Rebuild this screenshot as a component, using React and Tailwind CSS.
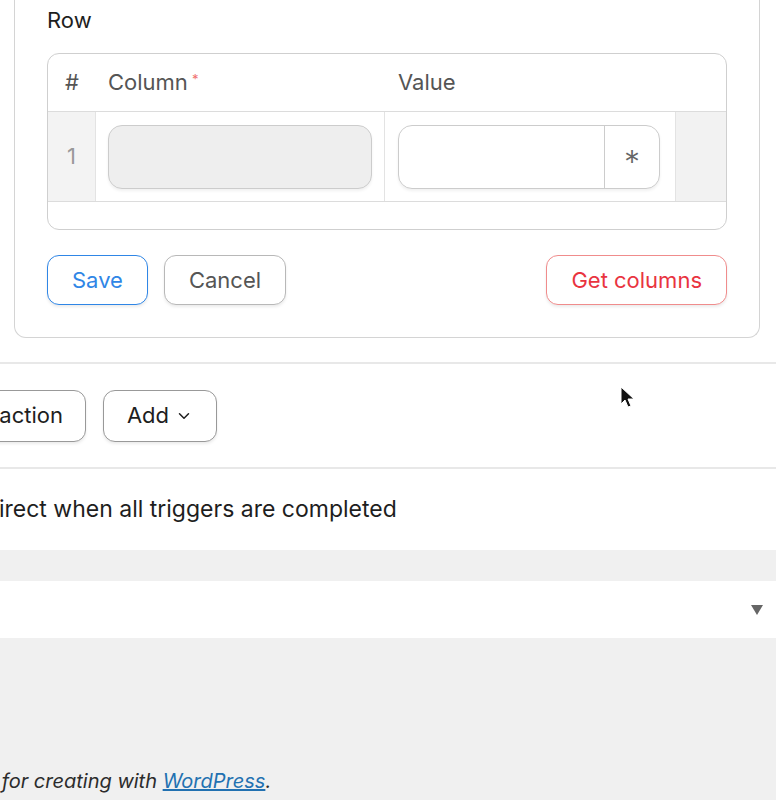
import { ChevronDown } from 'lucide-react';

const font = { fontFamily: 'Inter, "Noto Sans", sans-serif' };

function OutlineButton({ children, className = '' }) {
  return (
    <button
      className={`h-[50px] rounded-[12px] border bg-white px-[24px] text-[22px] shadow-[0_2px_3px_rgba(0,0,0,0.08)] ${className}`}
    >
      {children}
    </button>
  );
}

function RowTable() {
  return (
    <div className="overflow-hidden rounded-[12px] border border-[#cfcfcf] bg-white">
      <div className="grid h-[58px] grid-cols-[48px_289px_290px_1fr] items-center border-b border-[#dcdcdc] text-[22px] text-[#555]">
        <div className="text-center">#</div>
        <div className="pl-3">
          Column<sup className="ml-1 text-[13px] text-[#f07070]">*</sup>
        </div>
        <div className="pl-[13px]">Value</div>
        <div />
      </div>
      <div className="grid h-[90px] grid-cols-[48px_289px_290px_1fr] border-b border-[#dcdcdc]">
        <div className="flex items-center justify-center border-r border-[#e3e3e3] bg-[#f3f3f3] text-[22px] text-[#999]">
          1
        </div>
        <div className="flex items-center border-r border-[#e3e3e3] px-3">
          <div className="h-[64px] w-full rounded-[14px] border border-[#cccccc] bg-[#eeeeee] shadow-[0_2px_3px_rgba(0,0,0,0.06)]" />
        </div>
        <div className="flex items-center pl-[13px] pr-[15px]">
          <div className="flex h-[64px] w-full overflow-hidden rounded-[14px] border border-[#cccccc] bg-white shadow-[0_2px_3px_rgba(0,0,0,0.06)]">
            <div className="flex-1" />
            <div className="flex w-[55px] items-center justify-center border-l border-[#cccccc] text-[32px] font-light leading-none text-[#666]">
              <span className="mt-[12px]">*</span>
            </div>
          </div>
        </div>
        <div className="border-l border-[#e3e3e3] bg-[#f2f2f2]" />
      </div>
      <div className="h-[27px]" />
    </div>
  );
}

export default function App() {
  return (
    <div className="relative h-[800px] w-[776px] overflow-hidden bg-[#f0f0f0]" style={font}>
      <div className="bg-white">
        <div className="pb-[24px] pl-[14px] pr-[16px]">
          <div className="rounded-b-[12px] border border-t-0 border-[#d4d4d4] px-[32px] pb-[32px] pt-[6px]">
            <h2 className="mb-[19px] text-[22px] leading-[28px] text-[#1e1e1e]">Row</h2>
            <RowTable />
            <div className="mt-[25px] flex items-center gap-4">
              <OutlineButton className="border-[#2f86e6] text-[#2f86e6]">Save</OutlineButton>
              <OutlineButton className="border-[#b8b8b8] text-[#555]">Cancel</OutlineButton>
              <OutlineButton className="ml-auto border-[#f08c8c] text-[#e9343f]">
                Get columns
              </OutlineButton>
            </div>
          </div>
        </div>

        <div className="border-t-2 border-[#e8e8e8]">
          <div className="flex h-[103px] items-center gap-[17px] whitespace-nowrap">
            <button className="ml-[-72px] h-[52px] w-[158px] rounded-[12px] border border-[#999] bg-white text-[22px] text-[#1e1e1e] shadow-[0_2px_3px_rgba(0,0,0,0.08)]">
              Add action
            </button>
            <button className="flex h-[52px] w-[114px] items-center justify-center gap-[6px] rounded-[12px] border border-[#999] bg-white text-[22px] text-[#1e1e1e] shadow-[0_2px_3px_rgba(0,0,0,0.08)]">
              Add
              <ChevronDown size={18} strokeWidth={2} />
            </button>
          </div>
        </div>

        <div className="flex h-[83px] items-center border-t-2 border-[#e8e8e8]">
          <p className="ml-[-43px] whitespace-nowrap text-[23px] text-[#1e1e1e]">
            Redirect when all triggers are completed
          </p>
        </div>
      </div>

      <div className="h-[31px]" />

      <div className="flex h-[57px] items-center justify-end bg-white pr-[13px]">
        <svg width="12" height="10" viewBox="0 0 12 10">
          <path d="M0 0 H12 L6 10 Z" fill="#666" />
        </svg>
      </div>

      <div className="flex h-[163px] items-end pb-[5px]">
        <p className="ml-[-104px] whitespace-nowrap text-[20px] italic text-[#2c2c2c]">
          Thank you for creating with{' '}
          <a href="#" className="text-[#2271b1] underline">
            WordPress
          </a>
          .
        </p>
      </div>

      <svg
        className="absolute left-[620px] top-[386px]"
        width="16"
        height="24"
        viewBox="0 0 16 24"
      >
        <path d="M1 1 L1 18 L5 14 L8 21 L11 20 L8 13 L14 13 Z" fill="#111" stroke="#fff" strokeWidth="1" />
      </svg>
    </div>
  );
}
